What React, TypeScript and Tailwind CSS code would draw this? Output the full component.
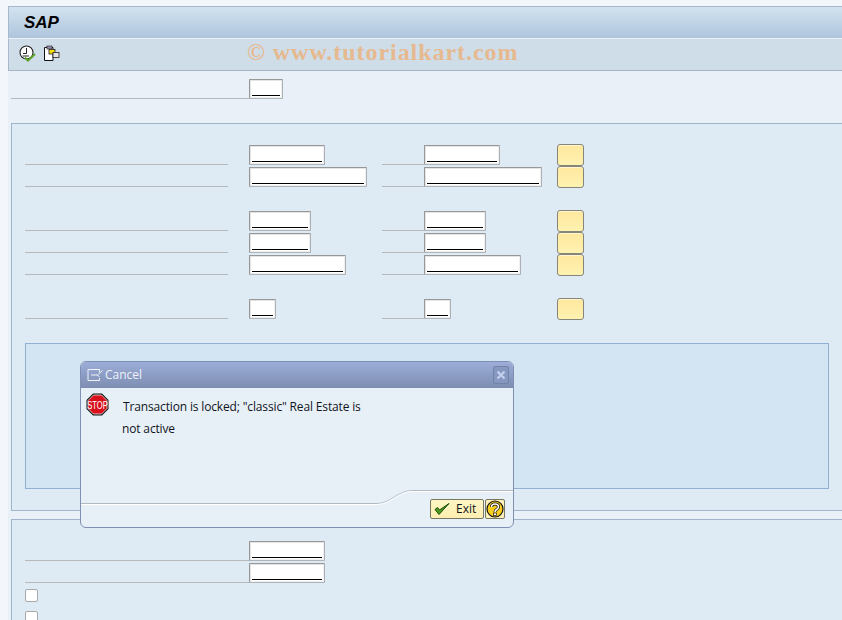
import React from 'react';

const FONT = "font-['Open_Sans','Noto_Sans',sans-serif]";

// Input with the underlined SAP entry field look
const Field = ({ width }: { width: string }) => (
  <div className={`h-[20px] shrink-0 border border-[#989898] border-b-[#b0b4b8] border-r-[#acb0b4] bg-white rounded-[1px] px-[2px] pb-[2px] flex items-end shadow-[inset_1px_1px_0_#e4e4e4,inset_-1px_-1px_0_#f0f0f0] ${width}`}>
    <div className="h-px w-full bg-black" />
  </div>
);

const Line = ({ className }: { className: string }) => <div className={`h-px mt-[19px] shrink-0 bg-[#b5b9bc] ${className}`} />;

const PushButton = () => (
  <div className="w-[27px] h-[22px] -mt-px shrink-0 rounded-[3px] border border-[#85857a] bg-gradient-to-b from-[#ffe89e] to-[#fff2b0] shadow-[inset_0_1px_0_#fff6d0]" />
);

const rows = ['w-[76px]', 'w-[118px]', null, 'w-[62px]', 'w-[62px]', 'w-[97px]', null, 'w-[27px]'];

const ClockIcon = () => (
  <svg width="18" height="18" viewBox="0 0 18 18" className="shrink-0 -mt-[2px]">
    <circle cx="7.5" cy="7.5" r="6.5" fill="#fff" stroke="#222" strokeWidth="1.1" />
    <path d="M7.5 3V8.5M4 8.5H7.5M3.5 11H10" stroke="#222" strokeWidth="1" fill="none" />
    <path d="M6 12.5L9 15.5L16 9" stroke="#5aa02c" strokeWidth="2" fill="none" />
  </svg>
);

const VariantIcon = () => (
  <svg width="17" height="17" viewBox="0 0 17 17" className="shrink-0">
    <path d="M1.5 2.5H4V1.5H8V2.5H10V15.5H1.5Z" fill="#fff" stroke="#111" />
    <rect x="4" y="1" width="5" height="3" fill="#9a8bb0" stroke="#333" strokeWidth="0.7" />
    <rect x="6" y="4.5" width="6" height="4.5" fill="#f6dc10" stroke="#222" strokeWidth="0.8" />
    <rect x="10" y="7.5" width="6" height="5" fill="#e4e4e4" stroke="#222" strokeWidth="0.8" />
  </svg>
);

const StopIcon = () => (
  <svg width="23" height="23" viewBox="0 0 23 23" className="shrink-0">
    <polygon points="7,0.5 16,0.5 22.5,7 22.5,16 16,22.5 7,22.5 0.5,16 0.5,7" fill="#111" />
    <polygon points="7.5,2 15.5,2 21,7.5 21,15.5 15.5,21 7.5,21 2,15.5 2,7.5" fill="#d8101c" stroke="#fff" strokeWidth="0.7" />
    <text transform="translate(11.5 15.5) scale(1 1.5)" textAnchor="middle" fontSize="7.6" fill="#fff" fontFamily="'Liberation Sans',sans-serif">STOP</text>
  </svg>
);

const CancelGlyph = () => (
  <svg width="16" height="12" viewBox="0 0 16 12" className="shrink-0">
    <path d="M12.5 3V.5H1V11.5H12.5V9M4 6H10.5L15.5 1.5M10.5 6L12.5 8" stroke="#eef2fa" strokeWidth="1" fill="none" />
  </svg>
);

const CheckIcon = () => (
  <svg width="16" height="14" viewBox="0 0 16 14" className="shrink-0">
    <path d="M1 7.5L5 12.5L15 1.5L5.5 8L3.5 5.5Z" fill="#4f9a1e" stroke="#174d0b" strokeWidth="1" strokeLinejoin="round" />
  </svg>
);

const HelpIcon = () => (
  <svg width="18" height="18" viewBox="0 0 18 18" className="shrink-0">
    <circle cx="9" cy="9" r="8" fill="#f9cf1e" stroke="#111" strokeWidth="1.2" />
    <path d="M5.5 7C5.5 3 12.5 3 12.5 7C12.5 9.5 9 9 9 12" stroke="#111" strokeWidth="3" fill="none" />
    <path d="M5.5 7C5.5 3 12.5 3 12.5 7C12.5 9.5 9 9 9 12" stroke="#fff" strokeWidth="1.6" fill="none" />
    <rect x="7.5" y="13" width="3" height="2.6" fill="#fff" stroke="#111" strokeWidth="0.7" />
  </svg>
);

const Dialog = () => (
  <div className={`absolute left-[80px] top-[361px] w-[434px] h-[167px] rounded-[6px] border border-[#7f90b4] bg-[#e8f0f7] overflow-hidden flex flex-col ${FONT}`}>
    <div className="h-[26px] shrink-0 bg-gradient-to-b from-[#9cadd8] to-[#7d8db2] flex items-center pl-[6px] pr-[4px]">
      <CancelGlyph />
      <span className="ml-[2px] text-[12px] text-[#eef2fa]">Cancel</span>
      <div className="ml-auto w-[16px] h-[18px] rounded-[2px] border border-[#7282a8] bg-[#8798c0] flex items-center justify-center">
        <svg width="10" height="10" viewBox="0 0 10 10">
          <path d="M1.5 1.5L8.5 8.5M8.5 1.5L1.5 8.5" stroke="#c4d2f0" strokeWidth="2.2" />
        </svg>
      </div>
    </div>
    <div className="flex-1 relative flex items-start pl-[5px] pt-[5px]">
      <StopIcon />
      <div className="ml-[14px] text-[12px] leading-[22px] text-[#10141c] pt-[3px] tracking-[-0.15px]">
        <div>Transaction is locked; "classic" Real Estate is</div>
        <div className="-ml-px">not active</div>
      </div>
    </div>
    <svg width="432" height="16" viewBox="0 0 432 16" className="shrink-0 mb-[22px]">
      <path d="M0 14.5H296C310 14.5 316 1.5 332 1.5H432" fill="none" stroke="#b0b9c4" strokeWidth="1" />
      <path d="M0 15.5H296C310 15.5 316 2.5 332 2.5H432" fill="none" stroke="#fff" strokeWidth="1" />
    </svg>
    <div className="absolute right-[8px] bottom-[8px] flex gap-px">
      <div className="w-[54px] h-[20px] rounded-[2px] border border-[#777766] bg-gradient-to-b from-[#fff6c4] to-[#ffeeb0] flex items-center pl-[3px]">
        <CheckIcon />
        <span className="ml-[6px] text-[12px] text-[#10141c]">Exit</span>
      </div>
      <div className="w-[20px] h-[20px] rounded-[2px] border border-[#777766] bg-[#fff2b8] flex items-center justify-center">
        <HelpIcon />
      </div>
    </div>
  </div>
);

export default function App() {
  return (
    <div className={`relative w-[842px] h-[620px] overflow-hidden bg-[#f3f6fa] pl-[8px] pt-[6px] flex flex-col ${FONT}`}>
      {/* title bar */}
      <div className="h-[32px] shrink-0 border border-[#a7b8cc] border-r-0 border-b-0 bg-gradient-to-b from-[#d3e2f0] to-[#adc5dc] flex items-center pl-[15px]">
        <span className="text-[17px] font-bold italic text-black font-['Liberation_Sans',sans-serif]">SAP</span>
      </div>
      {/* toolbar */}
      <div className="h-[33px] shrink-0 border-t border-[#eaf1f7] border-b border-b-[#a7b5c6] border-l border-l-[#a7b8cc] bg-[#cfdde9] flex items-center pl-[10px]">
        <ClockIcon />
        <div className="ml-[6px] -mt-[2px]"><VariantIcon /></div>
        <span className="ml-[187px] -mt-[6px] text-[24px] leading-none font-bold text-[#e6b98f] tracking-[0.95px] font-['Liberation_Serif',serif]">© www.tutorialkart.com</span>
      </div>

      <div className="flex-1 bg-[#e9f0f7] pl-[3px] min-h-0 overflow-hidden">
        {/* top row */}
        <div className="mt-[8px] flex items-start h-[20px]">
          <Line className="w-[238px]" />
          <Field width="w-[34px]" />
        </div>

        {/* first group */}
        <div className="mt-[24px] h-[388px] border border-[#a0b5cb] border-r-0 bg-[#deeaf4] pt-[21px] pl-[13px]">
          {rows.map((width, i) =>
            width ? (
              <div key={i} className="h-[22px] flex items-start">
                <Line className="w-[203px] mr-[21px]" />
                <div className="w-[133px] shrink-0"><Field width={width} /></div>
                <Line className="w-[42px]" />
                <div className="w-[133px] shrink-0"><Field width={width} /></div>
                <PushButton />
              </div>
            ) : (
              <div key={i} className="h-[22px]" />
            ),
          )}
          <div className="mt-[22px] w-[804px] h-[146px] border border-[#92b1d2] bg-[#d3e4f2]" />
        </div>

        {/* second group */}
        <div className="mt-[8px] h-[110px] border border-[#a0b5cb] border-r-0 bg-[#deeaf4] pt-[21px] pl-[13px]">
          <div className="h-[22px] flex items-start">
            <Line className="w-[224px]" />
            <Field width="w-[76px]" />
          </div>
          <div className="h-[22px] flex items-start">
            <Line className="w-[224px]" />
            <Field width="w-[76px]" />
          </div>
          <div className="mt-[4px] w-[13px] h-[13px] rounded-[2px] border border-[#a9a9a9] bg-white" />
          <div className="mt-[9px] w-[13px] h-[13px] rounded-[2px] border border-[#a9a9a9] bg-white" />
        </div>
      </div>
      <Dialog />
    </div>
  );
}
